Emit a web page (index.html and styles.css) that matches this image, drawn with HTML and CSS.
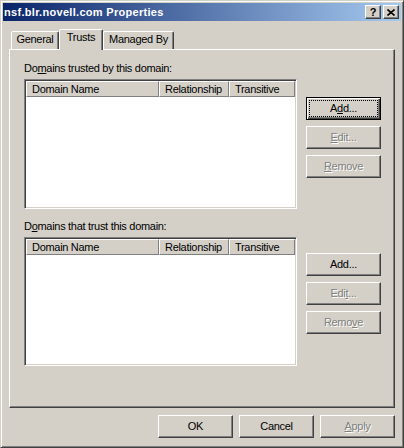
FILE: index.html
```html
<!DOCTYPE html>
<html lang="en">
<head>
<meta charset="UTF-8">
<title>nsf.blr.novell.com Properties</title>
<link rel="stylesheet" href="styles.css">
</head>
<body>
  <div class="window">
    <!-- Title bar -->
    <div class="titlebar">
      <span class="title">nsf.blr.novell.com Properties</span>
      <div class="caption-btns">
        <button class="caption-btn help">?</button>
        <button class="caption-btn close">
          <svg width="8" height="7" viewBox="0 0 8 7"><path d="M0.5 0.5 L7.5 6.5 M7.5 0.5 L0.5 6.5" stroke="#000" stroke-width="1.6" fill="none"/></svg>
        </button>
      </div>
    </div>

    <div class="content">
      <!-- Tabs -->
      <div class="tabs">
        <div class="tab tab-general">General</div>
        <div class="tab tab-trusts active">Trusts</div>
        <div class="tab tab-managed">Managed By</div>
      </div>

      <div class="panel">
        <!-- Outgoing trusts -->
        <section class="group">
          <div class="group-label">Do<u>m</u>ains trusted by this domain:</div>
          <div class="group-row">
            <div class="listview lv-first">
              <div class="lv-header">
                <div class="lv-col col-name">Domain Name</div>
                <div class="lv-col col-rel">Relationship</div>
                <div class="lv-col col-trans">Transitive</div>
              </div>
            </div>
            <div class="side-btns">
              <button class="btn default">A<u>d</u>d...</button>
              <button class="btn" disabled><u>E</u>dit...</button>
              <button class="btn" disabled><u>R</u>emove</button>
            </div>
          </div>
        </section>

        <!-- Incoming trusts -->
        <section class="group second">
          <div class="group-label">D<u>o</u>mains that trust this domain:</div>
          <div class="group-row">
            <div class="listview lv-second">
              <div class="lv-header">
                <div class="lv-col col-name">Domain Name</div>
                <div class="lv-col col-rel">Relationship</div>
                <div class="lv-col col-trans">Transitive</div>
              </div>
            </div>
            <div class="side-btns">
              <button class="btn">Add...</button>
              <button class="btn" disabled>Edi<u>t</u>...</button>
              <button class="btn" disabled>Remo<u>v</u>e</button>
            </div>
          </div>
        </section>
      </div>

      <!-- Dialog buttons -->
      <div class="footer">
        <button class="btn">OK</button>
        <button class="btn">Cancel</button>
        <button class="btn" disabled><u>A</u>pply</button>
      </div>
    </div>
  </div>
</body>
</html>
```

FILE: styles.css
```css
/* Windows classic palette */
:root {
  --face: #d4d0c8;
  --light: #ffffff;
  --shadow: #808080;
  --dark: #404040;
}

* { box-sizing: border-box; }
body {
  margin: 0;
  background: var(--face);
  font-family: "Liberation Sans", Arial, sans-serif;
  font-size: 11px;
  letter-spacing: -0.3px;
  color: #000;
}

/* Window frame */
.window {
  width: 404px;
  height: 448px;
  background: var(--face);
  border: 1px solid;
  border-color: var(--face) var(--dark) var(--dark) var(--face);
  box-shadow: inset 1px 1px var(--light), inset -1px -1px var(--shadow);
  padding: 2px;
  display: flex;
  flex-direction: column;
}

/* Title bar */
.titlebar {
  height: 18px;
  background: linear-gradient(to right, #0a246a, #a6caf0);
  display: flex;
  align-items: center;
  justify-content: space-between;
  padding: 0 2px 0 1px;
}
.title {
  color: #fff;
  font-weight: bold;
  letter-spacing: 0.3px;
  line-height: 18px;
}
.caption-btns { display: flex; gap: 2px; }
.caption-btn {
  width: 16px;
  height: 14px;
  padding: 0;
  background: var(--face);
  border: 1px solid;
  border-color: var(--light) var(--dark) var(--dark) var(--light);
  box-shadow: inset -1px -1px var(--shadow);
  display: flex;
  align-items: center;
  justify-content: center;
  font-family: "Liberation Sans", Arial, sans-serif;
  font-weight: bold;
  font-size: 11px;
  line-height: 12px;
  color: #000;
}
.caption-btn svg { display: block; }

/* Body */
.content {
  flex: 1;
  padding: 8px 6px 0;
  display: flex;
  flex-direction: column;
}

/* Tabs */
.tabs {
  display: flex;
  align-items: flex-end;
  height: 20px;
  padding-left: 2px;
}
.tab {
  height: 18px;
  border: 1px solid;
  border-bottom: none;
  border-color: var(--light) var(--dark) transparent var(--light);
  border-radius: 2px 2px 0 0;
  box-shadow: inset -1px 0 var(--shadow);
  background: var(--face);
  text-align: center;
  padding-top: 1px;
  line-height: 13px;
}
.tab-general { width: 48px; }
.tab-trusts { width: 44px; }
.tab-managed { width: 71px; }
.tab.active {
  height: 21px;
  margin-bottom: -1px;
  position: relative;
  z-index: 1;
}

/* Tab page */
.panel {
  width: 386px;
  height: 359px;
  border: 1px solid;
  border-color: var(--light) var(--dark) var(--dark) var(--light);
  box-shadow: inset -1px -1px var(--shadow);
  padding: 12px 14px 0;
}
.group.second { margin-top: 11px; }
.group-label {
  line-height: 13px;
  height: 13px;
  margin-bottom: 4px;
  white-space: nowrap;
}
.group-row {
  display: flex;
  align-items: flex-start;
}

/* List views */
.listview {
  width: 273px;
  background: #fff;
  border: 1px solid;
  border-color: var(--shadow) var(--light) var(--light) var(--shadow);
  box-shadow: inset 1px 1px var(--dark), inset -1px -1px var(--face);
  padding: 1px;
}
.lv-first { height: 130px; }
.lv-second { height: 129px; }
.lv-header {
  display: flex;
  height: 16px;
}
.lv-col {
  height: 16px;
  background: var(--face);
  border: 1px solid;
  border-color: var(--light) var(--shadow) var(--shadow) var(--light);
  line-height: 14px;
  padding-left: 5px;
  white-space: nowrap;
  overflow: hidden;
}
.col-name { width: 133px; }
.col-rel { width: 70px; }
.col-trans { width: 66px; }

/* Push buttons */
.side-btns {
  display: flex;
  flex-direction: column;
  gap: 6px;
  margin-left: 9px;
  margin-top: 18px;
}
.group.second .side-btns { margin-top: 16px; }

.btn {
  position: relative;
  width: 75px;
  height: 23px;
  padding: 0;
  font: inherit;
  letter-spacing: inherit;
  color: #000;
  background: var(--face);
  border: 1px solid;
  border-color: var(--light) var(--dark) var(--dark) var(--light);
  box-shadow: inset -1px -1px var(--shadow);
  line-height: 21px;
  text-align: center;
}
.btn.default {
  border-color: #000;
  box-shadow: inset 1px 1px var(--light), inset -1px -1px var(--dark), inset -2px -2px var(--shadow);
}
.btn.default::after {
  content: "";
  position: absolute;
  inset: 2px;
  border: 1px dotted #000;
}
.btn:disabled {
  color: var(--shadow);
  text-shadow: 1px 1px var(--light);
}

/* Dialog buttons */
.footer {
  display: flex;
  justify-content: flex-end;
  gap: 6px;
  margin-top: 7px;
}
```
